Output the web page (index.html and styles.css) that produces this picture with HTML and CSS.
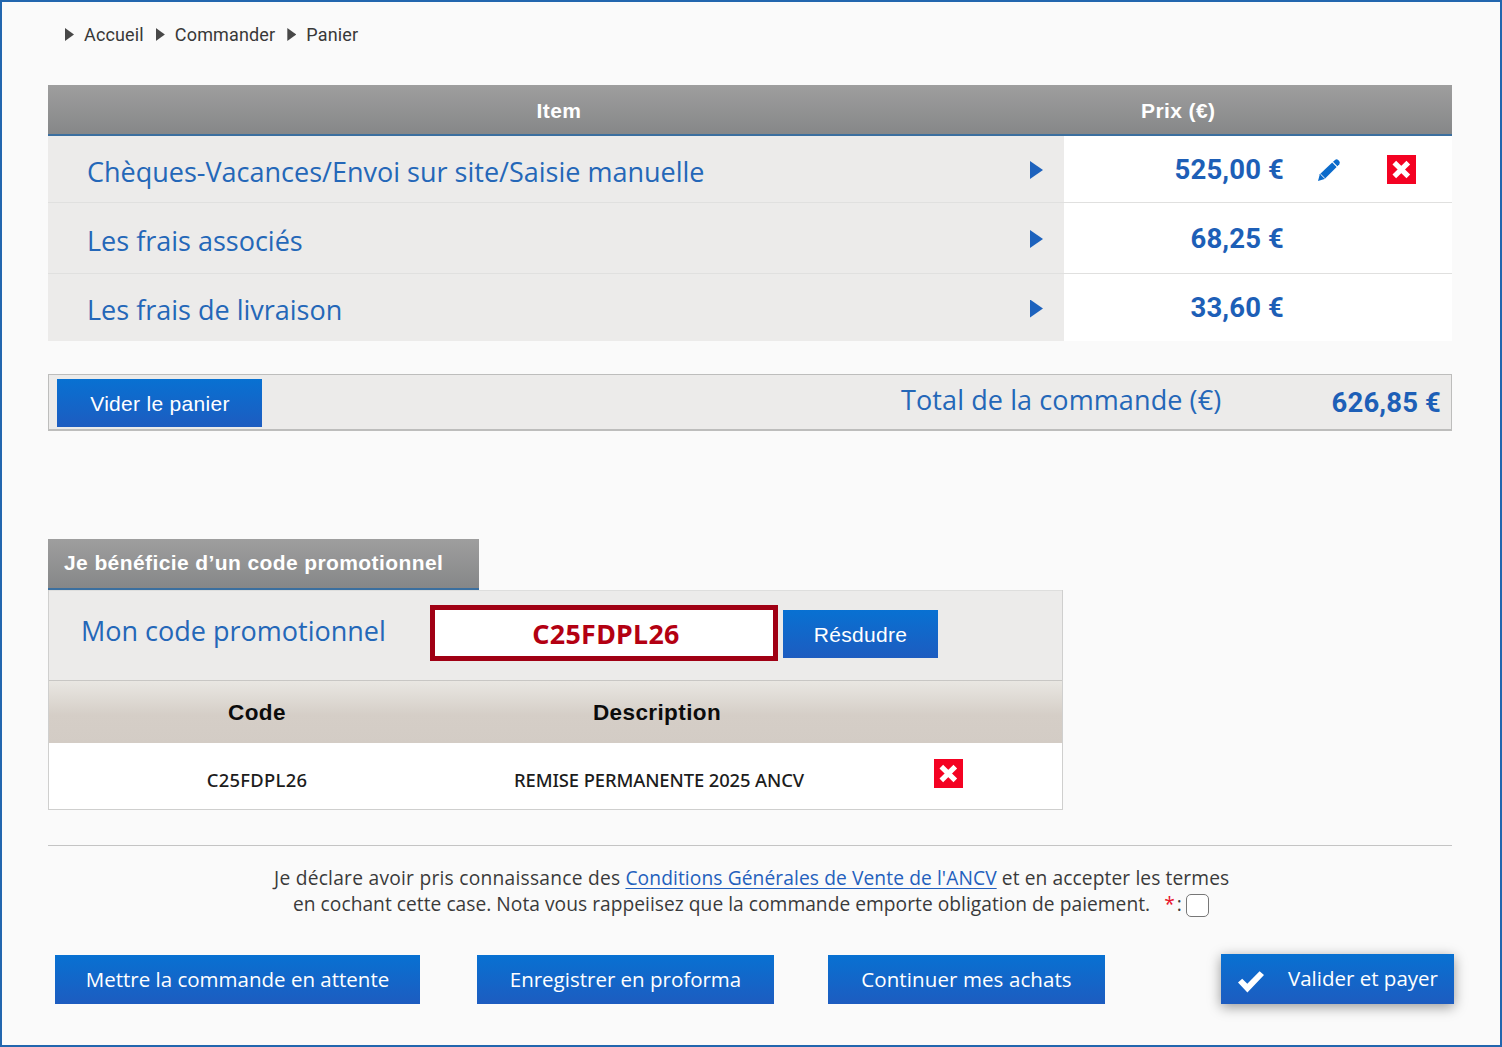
FILE: index.html
```html
<!DOCTYPE html>
<html lang="fr">
<head>
  <meta charset="utf-8">
  <title>Panier</title>
  <link rel="stylesheet" href="styles.css">
</head>
<body>
  <div id="page">
    <div id="breadcrumb">
      <i class="arrow"></i><a>Accueil</a>
      <i class="arrow"></i><a>Commander</a>
      <i class="arrow"></i><a>Panier</a>
    </div>

    <div id="cart">
      <div class="cartHead">
        <div class="item">Item</div>
        <div class="prix">Prix (€)</div>
      </div>
      <div class="row first">
        <div class="label"><span>Chèques-Vacances/Envoi sur site/Saisie manuelle</span><i class="arrow blue"></i></div>
        <div class="price">525,00 €</div>
        <div class="actions">
          <svg class="pencil" width="24" height="24" viewBox="0 0 24 24">
            <path fill="#0b6bcb" d="M1 23 L2.8 16.2 L15.2 4.6 L19.6 9 L7.6 21 Z"/>
            <path fill="#0b6bcb" d="M16 3.8 L18 1.9 Q19.6 .8 21.2 2 L22.2 3 Q23.4 4.6 22.3 6.3 L20.4 8.2 Z"/>
            <path stroke="#fff" stroke-width="1" fill="none" d="M3.4 16 L7.8 20.4"/>
          </svg>
          <svg class="cross" width="29" height="29" viewBox="0 0 29 29">
            <rect width="29" height="29" fill="#f40222"/>
            <path stroke="#fff" stroke-width="5.2" d="M7.3 7.6 L21.3 21.4 M21.3 7.6 L7.3 21.4"/>
          </svg>
        </div>
      </div>
      <div class="row second">
        <div class="label"><span>Les frais associés</span><i class="arrow blue"></i></div>
        <div class="price">68,25 €</div>
        <div class="actions"></div>
      </div>
      <div class="row third">
        <div class="label"><span>Les frais de livraison</span><i class="arrow blue"></i></div>
        <div class="price">33,60 €</div>
        <div class="actions"></div>
      </div>
    </div>

    <div id="total">
      <button class="btn arial empty">Vider le panier</button>
      <div class="totalLabel">Total de la commande (€)</div>
      <div class="totalPrice">626,85 €</div>
    </div>

    <div id="promoTitle">Je bénéficie d’un code promotionnel</div>
    <div id="promo">
      <form class="promoForm">
        <label for="code">Mon code promotionnel</label>
        <input type="text" id="code" value="C25FDPL26">
        <button type="button" class="btn arial resolve">Résdudre</button>
      </form>
      <div class="promoRow promoHead">
        <div>Code</div>
        <div>Description</div>
        <div></div>
      </div>
      <div class="promoRow promoLine">
        <div class="code">C25FDPL26</div>
        <div class="desc">REMISE PERMANENTE 2025 ANCV</div>
        <div>
          <svg class="cross" width="29" height="29" viewBox="0 0 29 29">
            <rect width="29" height="29" fill="#f40222"/>
            <path stroke="#fff" stroke-width="5.2" d="M7.3 7.6 L21.3 21.4 M21.3 7.6 L7.3 21.4"/>
          </svg>
        </div>
      </div>
    </div>

    <div id="terms">
      <p class="line1"><span class="declare">Je déclare avoir pris connaissance des</span> <a href="#">Conditions Générales de Vente de l'ANCV</a> et en accepter les termes</p>
      <p class="line2">en cochant cette case. Nota vous rappeiisez que la commande emporte obligation de paiement.<span class="star">*</span><span class="colon">:</span><input type="checkbox"></p>
    </div>

    <div id="buttons">
      <button class="btn hold">Mettre la commande en attente</button>
      <button class="btn proforma">Enregistrer en proforma</button>
      <button class="btn shop">Continuer mes achats</button>
      <button class="btn pay">
        <svg width="28" height="24" viewBox="0 0 28 24">
          <path fill="#fff" d="M1 12.6 L5.2 8.8 L10.3 13.8 L22.6 1.2 L27 5 L10.4 22.4 Z"/>
        </svg>
        <span>Valider et payer</span>
      </button>
    </div>
  </div>
</body>
</html>
```
FILE: styles.css
```css
* {
  box-sizing: border-box;
  margin: 0;
  padding: 0;
}
body {
  background-color: #fafafa;
  font-family: "Open Sans", sans-serif;
  color: #3a3a3a;
}
#page {
  width: 1502px;
  height: 1047px;
  padding: 0 48px 0 46px;
  border: 2px solid #2266ae;
  overflow: hidden;
}

#breadcrumb {
  display: flex;
  align-items: center;
  height: 65px;
  margin-bottom: 18px;
  padding-left: 17px;
  font-family: Roboto, sans-serif;
  font-size: 18px;
  letter-spacing: .15px;
  color: #383838;
}
#breadcrumb a {
  margin: 0 12px 0 10px;
}
.arrow {
  width: 9px;
  height: 13px;
  background-color: #484848;
  clip-path: polygon(0 0, 100% 50%, 0 100%);
}
.arrow.blue {
  width: 13px;
  height: 18px;
  background-color: #1d62bd;
}

#cart {
  width: 1404px;
}
.cartHead,
#promoTitle {
  background: linear-gradient(#9e9e9e, #868788);
  border-bottom: 2px solid #3b6f9f;
  color: #fff;
  font: bold 21px/52px "Liberation Sans", sans-serif;
  letter-spacing: .4px;
}
.cartHead {
  display: grid;
  grid-template-columns: 1016px 1fr;
  height: 51px;
}
.item {
  padding-left: 6px;
  text-align: center;
}
.prix {
  padding-left: 77px;
}
.row {
  display: grid;
  grid-template-columns: 1016px 220px 1fr;
  border-bottom: 1px solid #e0e0df;
  background-color: #fff;
}
.first {
  height: 67px;
}
.second {
  height: 71px;
}
.third {
  height: 67px;
  border-bottom: 0;
}
.label {
  display: flex;
  align-items: center;
  justify-content: space-between;
  padding: 4px 21px 0 39px;
  background-color: #ecebea;
  color: #2467b8;
  font-size: 27px;
}
.label .arrow {
  margin-bottom: 2px;
}
.price,
.totalPrice {
  color: #1d5fb7;
  font: bold 27.5px/64px Roboto, sans-serif;
  letter-spacing: .15px;
  text-align: right;
}
.price {
  padding-top: 2px;
}
.second .price {
  padding-top: 4px;
}
.actions {
  display: flex;
  align-items: center;
}
.pencil {
  margin: 2px 0 0 33px;
}
.actions .cross {
  margin-left: 46px;
}

#total {
  display: flex;
  align-items: center;
  height: 57px;
  margin-top: 33px;
  padding: 0 10px 0 8px;
  border: 1px solid #bdbdbc;
  border-bottom-width: 2px;
  background-color: #ecebea;
}
.totalLabel {
  width: 321px;
  margin: -5px 0 0 auto;
  color: #2467b8;
  font-size: 27px;
  letter-spacing: .1px;
}
.totalPrice {
  width: 219px;
  padding-top: 2px;
}

.btn {
  height: 49px;
  border: 0;
  background: linear-gradient(#0871d2, #1d5cc0);
  color: #fff;
  font: 20.5px/49px "Open Sans", sans-serif;
  text-align: center;
}
.arial {
  font: 21px/48px "Liberation Sans", sans-serif;
  letter-spacing: .3px;
}
.empty {
  width: 205px;
  height: 48px;
  margin-top: 2px;
  padding: 1px 0 0 1px;
}

#promoTitle {
  width: 431px;
  height: 51px;
  margin-top: 108px;
  padding-left: 16px;
  line-height: 48px;
}
#promo {
  width: 1015px;
  height: 220px;
  border: 1px solid #cfcfce;
  border-top: 0;
  background-color: #fff;
}
.promoForm {
  display: flex;
  height: 90px;
  padding: 14px 0 0 32px;
  border-top: 1px solid #dededd;
  background-color: #ecebea;
}
.promoForm label {
  width: 349px;
  padding-top: 7px;
  color: #2467b8;
  font-size: 27px;
}
#code {
  width: 348px;
  height: 56px;
  padding-left: 4px;
  border: 5px solid #a00014;
  background-color: #fff;
  color: #b30012;
  font: bold 26.8px "Noto Sans", sans-serif;
  letter-spacing: .35px;
  text-align: center;
}
.resolve {
  width: 155px;
  height: 48px;
  margin: 5px 0 0 5px;
  padding-top: 1px;
}
.promoRow {
  display: grid;
  grid-template-columns: 416px 384px 1fr;
  text-align: center;
}
.promoHead {
  height: 63px;
  border-top: 1px solid #c8c7c4;
  background: linear-gradient(#e9e7e2, #d5cec7 55%, #d3ccc5);
  color: #0c0c0c;
  font: bold 22.5px/63px "Liberation Sans", sans-serif;
  letter-spacing: .4px;
}
.promoLine {
  padding-top: 1px;
  color: #1c1c1c;
  font: 500 18.4px/72px "Noto Sans", sans-serif;
}
.code {
  letter-spacing: .3px;
}
.desc {
  padding-left: 4px;
  letter-spacing: -.1px;
}
.promoLine .cross {
  display: block;
  margin: 15px 0 0 85px;
}

#terms {
  width: 1404px;
  margin-top: 35px;
  border-top: 1px solid #c4c4c4;
  padding-top: 19px;
  font-size: 19.2px;
  line-height: 26px;
}
#terms a {
  color: #2360bd;
  text-decoration-thickness: 1px;
  text-underline-offset: 3px;
}
.line1 {
  padding-left: 226px;
  letter-spacing: .1px;
  white-space: nowrap;
}
.declare {
  letter-spacing: .25px;
}
.line2 {
  display: flex;
  padding-left: 245px;
  letter-spacing: .03px;
}
.star {
  margin-left: 14px;
  color: #e8132b;
}
.colon {
  margin-left: 2px;
}
#terms input {
  appearance: none;
  width: 23px;
  height: 23px;
  margin: 3px 0 0 4px;
  border: 1.5px solid #777;
  border-radius: 5px;
  background-color: #fff;
}

#buttons {
  display: flex;
  margin: 38px -2px 0 7px;
}
.hold {
  width: 365px;
}
.proforma {
  width: 297px;
  margin-left: 57px;
}
.shop {
  width: 277px;
  margin-left: 54px;
  letter-spacing: .1px;
}
.pay {
  display: flex;
  align-items: center;
  width: 233px;
  height: 50px;
  margin: -1px 0 0 auto;
  padding: 0 15px 0 16px;
  box-shadow: 0 3px 12px rgba(0, 0, 0, .4);
}
.pay svg {
  margin-top: 6px;
}
.pay span {
  margin: -2px 0 0 23px;
  white-space: nowrap;
}
```
